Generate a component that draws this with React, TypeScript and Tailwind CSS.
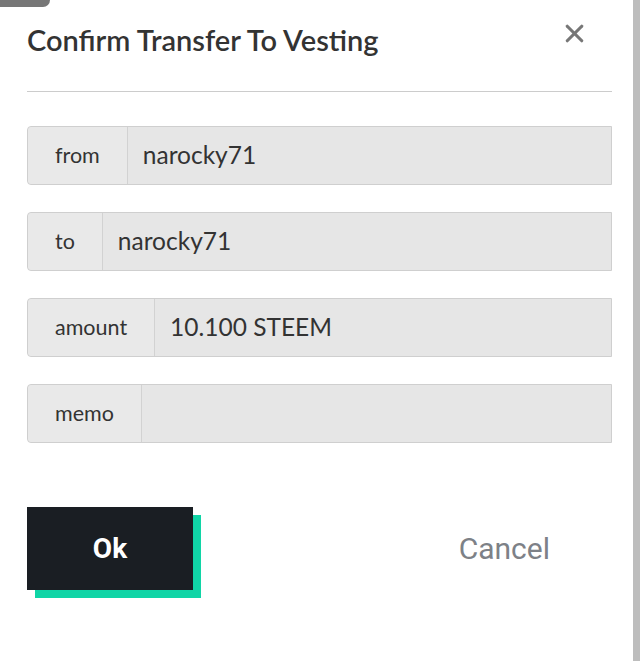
import { X } from "lucide-react";

const fields = [
  { label: "from", value: "narocky71" },
  { label: "to", value: "narocky71" },
  { label: "amount", value: "10.100 STEEM" },
  { label: "memo", value: "" },
];

function Field({ label, value }: { label: string; value: string }) {
  return (
    <div className="flex h-[59px] rounded-l-[4px] border border-[#cfcfcf] bg-[#e6e6e6]">
      <span className="flex items-center px-[27px] bg-[#e9e9e9] border-r border-[#d2d2d2] rounded-l-[4px] text-[21.5px] text-[#333]">
        {label}
      </span>
      <span className="flex items-center pl-[15px] text-[24.5px] text-[#333]">{value}</span>
    </div>
  );
}

function App() {
  return (
    <div
      className="relative w-[640px] h-[661px] flex bg-white overflow-hidden"
      style={{ fontFamily: '"Source Sans Pro", Lato, "Noto Sans", sans-serif' }}
    >
      <div className="absolute left-0 top-0 w-[50px] h-[7px] bg-[#777] rounded-br-[14px]" />
      <div className="flex-1 flex flex-col pl-[27px] pr-[21px]">
        <div className="flex items-start justify-between pt-[21px] pb-[33px] border-b border-[#cccccc]">
          <h1 className="text-[29px] font-semibold text-[#333] leading-[37px]">
            Confirm Transfer To Vesting
          </h1>
          <X className="mr-[23px] mt-[-2px] text-[#777]" size={29} strokeWidth={2.6} />
        </div>
        <div className="flex flex-col gap-[27px] pt-[34px]">
          {fields.map((f) => (
            <Field key={f.label} label={f.label} value={f.value} />
          ))}
        </div>
        <div className="flex items-center justify-between pt-[64px]">
          <div className="relative w-[174px] h-[91px]">
            <div className="absolute left-[8px] top-[8px] w-[166px] h-[83px] bg-[#10d5a6]" />
            <button
              className="absolute left-0 top-0 w-[166px] h-[83px] bg-[#1a1e23] text-white text-[28px] font-bold"
              style={{ fontFamily: "Roboto, sans-serif" }}
            >
              Ok
            </button>
          </div>
          <span
            className="mr-[62px] mb-[9px] text-[30px] text-[#7d8187]"
            style={{ fontFamily: "Roboto, sans-serif" }}
          >
            Cancel
          </span>
        </div>
      </div>
      <div className="w-[7px] bg-[#bdbdbd]" />
    </div>
  );
}

export default App;
